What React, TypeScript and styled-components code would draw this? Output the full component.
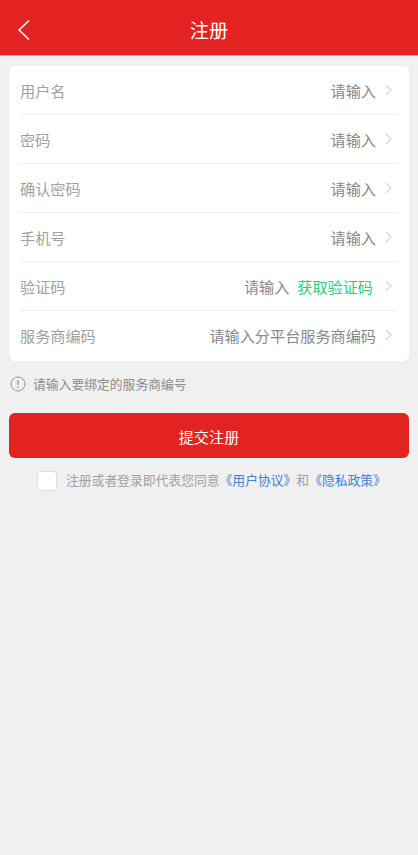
import React from "react";
import styled, { createGlobalStyle } from "styled-components";

const GlobalStyle = createGlobalStyle`
  * { box-sizing: border-box; }
  body { margin: 0; background: #f0f0f0; font-family: "Noto Sans CJK SC", sans-serif; }
`;

const Page = styled.div`
  min-height: 100vh;
  background: #f0f0f0;
`;

const Header = styled.header`
  height: 56px;
  display: grid;
  grid-template-columns: 48px 1fr 48px;
  align-items: center;
  background: #e32321;
  border-bottom: 1px solid #eba09f;
  color: #fff;
`;

const BackButton = styled.button`
  height: 55px;
  padding: 5px 0 0 17px;
  border: 0;
  background: none;
  display: flex;
  align-items: center;
`;

const Title = styled.h1`
  margin: 4px 0 0;
  font-size: 19.2px;
  line-height: 28px;
  font-weight: 400;
  text-align: center;
`;

const Card = styled.section`
  margin: 10px 9px 0;
  padding: 0 11px 0 10px;
  height: 295px;
  border-left: 1px solid #f8f8f8;
  border-radius: 6px;
  background: #fff;
`;

const Row = styled.div`
  height: 49px;
  display: flex;
  align-items: center;
  font-size: 15.15px;
  line-height: 22px;
  border-bottom: 1px solid #e8efef;
  &:last-child { border-bottom-color: transparent; }
`;

const Label = styled.span`
  flex: 1;
  color: #a0a0a0;
`;

const Value = styled.span`
  color: #888;
`;

const CodeLink = styled.span`
  margin: 0 3px 0 8px;
  color: #2bcd84;
`;

const Chevron = styled.svg`
  margin: 0 6px 1px 9px;
`;

const Hint = styled.p`
  margin: 13px 10px 0;
  height: 20px;
  display: flex;
  align-items: center;
  gap: 7px;
  font-size: 12.8px;
  line-height: 20px;
  color: #8c8c8c;
`;

const HintIcon = styled.svg`
  margin-bottom: 1px;
`;

const Submit = styled.button`
  display: block;
  width: calc(100% - 18px);
  height: 45px;
  margin: 19px 9px 0;
  padding: 1px 0 0;
  border: 0;
  border-radius: 6px;
  background: #e32321;
  color: #fff;
  font: 400 15.15px "Noto Sans CJK SC", sans-serif;
`;

const Agreement = styled.div`
  margin: 13px 0 0 37px;
  display: flex;
  align-items: center;
  height: 20px;
  font-size: 12.8px;
  color: #a0a0a0;
  white-space: nowrap;
`;

const Checkbox = styled.span`
  width: 20px;
  height: 20px;
  margin-right: 9px;
  border: 1px solid #dedede;
  border-radius: 3px;
  background: #fff;
`;

const Terms = styled.span`
  line-height: 20px;
  padding-bottom: 3px;
`;

const Policy = styled.span`
  color: #4280cb;
`;

const fields = [
  { label: "用户名", value: "请输入" },
  { label: "密码", value: "请输入" },
  { label: "确认密码", value: "请输入" },
  { label: "手机号", value: "请输入" },
  { label: "验证码", value: "请输入", action: "获取验证码" },
  { label: "服务商编码", value: "请输入分平台服务商编码" },
];

export default function App() {
  return (
    <Page lang="zh-CN">
      <GlobalStyle />
      <Header>
        <BackButton aria-label="返回">
          <svg width="14" height="22" viewBox="0 0 14 22" fill="none" stroke="#fff" strokeWidth="1.5">
            <path d="M12 1.5 2 11l10 9.5" />
          </svg>
        </BackButton>
        <Title>注册</Title>
      </Header>
      <Card>
        {fields.map((f) => (
          <Row key={f.label}>
            <Label>{f.label}</Label>
            <Value>{f.value}</Value>
            {f.action && <CodeLink>{f.action}</CodeLink>}
            <Chevron width="7" height="12" viewBox="0 0 7 12" fill="none" stroke="#d6d6d6" strokeWidth="1.2">
              <path d="M1 1 6 6 1 11" />
            </Chevron>
          </Row>
        ))}
      </Card>
      <Hint>
        <HintIcon width="16" height="16" viewBox="0 0 16 16" fill="none" stroke="#949494">
          <circle cx="8" cy="8" r="7" />
          <path d="M8 4v5M8 10.4v1.5" strokeWidth="1.3" />
        </HintIcon>
        请输入要绑定的服务商编号
      </Hint>
      <Submit>提交注册</Submit>
      <Agreement>
        <Checkbox />
        <Terms>
          注册或者登录即代表您同意<Policy>《用户协议》</Policy>和<Policy>《隐私政策》</Policy>
        </Terms>
      </Agreement>
    </Page>
  );
}
